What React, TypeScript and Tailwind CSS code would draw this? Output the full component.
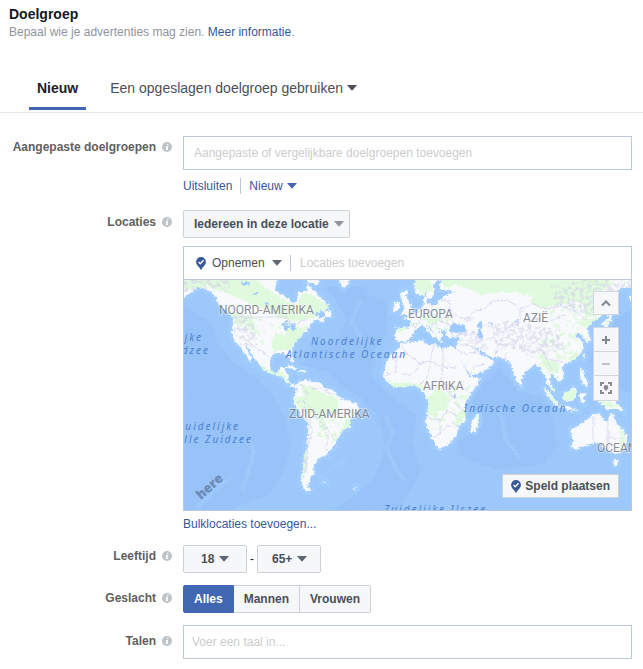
import { useState, type ReactNode } from 'react';
import clsx from 'clsx';

function Caret({ className }: { className?: string }) {
  return (
    <svg viewBox="0 0 10 6" className={clsx('w-2.5 h-1.5 shrink-0', className)} aria-hidden="true">
      <path d="M0 0h10L5.500 5.200a.7.7 0 0 1-1 0z" fill="currentColor" />
    </svg>
  );
}

function Info() {
  return (
    <svg viewBox="0 0 10 10" className="w-2.5 h-2.5 shrink-0" aria-hidden="true">
      <circle cx="5" cy="5" r="5" fill="#bec3c9" />
      <path d="M5.200 1.800h1.400l-.3 1.300H4.900zM4 4h2.200L5.600 7.200h.7L6.100 8H3.800l.6-3.200h-.6z" fill="#fff" />
    </svg>
  );
}

function Pin() {
  return (
    <svg viewBox="0 0 10 13" className="w-2.5 h-[13px] shrink-0" aria-hidden="true">
      <path d="M5 0a4.9 4.9 0 0 0-4.9 4.9C.1 8 3.2 9.6 5 13c1.800-3.400 4.900-5 4.900-8.100A4.900 4.900 0 0 0 5 0z" fill="#365899" />
      <path d="M2.600 5l1.700 1.700 3.200-3.400" fill="none" stroke="#fff" strokeWidth="1.400" />
    </svg>
  );
}

interface PickerProps {
  id?: string;
  label: string;
  options: string[];
  className?: string;
  caret?: string;
}

function Picker({ id, label, options, className, caret }: PickerProps) {
  return (
    <div className="relative">
      <select id={id} aria-label={label} className={clsx('appearance-none block outline-none', className)}>
        {options.map(o => <option key={o}>{o}</option>)}
      </select>
      <Caret className={clsx('absolute top-1/2 -translate-y-1/2 pointer-events-none', caret)} />
    </div>
  );
}

function Row({ label, htmlFor, className = 'pt-[3px]', children }: { label: string; htmlFor: string; className?: string; children: ReactNode }) {
  return (
    <div className="grid grid-cols-[172px_minmax(0,1fr)] gap-[11px]">
      <div className={className}>
        <label htmlFor={htmlFor} className="flex items-center justify-end gap-1.5 text-[12px] leading-4 font-bold text-[#606060]">
          {label}
          <Info />
        </label>
      </div>
      <div>{children}</div>
    </div>
  );
}

const land = [
  // North and Central America
  'M180 276H278L276 284 275 290 279 294 283 295 289 299 293 303 297 301 297 293 303 291 307 290 306 284 311 287 315 292 320 297 326 302 329 307 324 311 316 312 313 315 319 316 317 320 311 323 308 329 301 336 295 343 292 349 292 356 294 362 291 362 288 356 284 353 277 353 271 357 270 364 271 371 276 373 279 371 281 367 286 367 285 372 289 375 288 381 293 385 299 384 297 388 291 386 286 382 282 377 275 375 265 371 261 367 258 362 253 357 249 349 245 345 247 351 251 357 252 362 248 359 243 350 240 347 235 342 232 334 232 326 233 318 229 313 223 309 218 303 216 297 211 292 205 289 198 287 193 291 188 295 180 299z',
  'M303 278L319 280 318 285 310 283z', 'M324 312L331 310 332 317 326 317z', 'M317 319L326 317 322 322z',
  'M338 278H350L347 285 343 288 340 284z',
  'M284 367L290 365 298 369 292 369z', 'M299 370L306 370 305 373 299 372z',
  // South America
  'M297 386L300 381 306 379 311 382 320 382 325 388 333 390 337 395 341 399 350 401 357 404 358 409 355 415 351 420 350 427 342 431 339 437 335 443 332 449 327 452 327 456 319 457 317 462 314 464 313 470 315 473 310 477 310 482 307 486 312 491 306 491 302 486 301 477 303 468 304 457 307 446 308 434 308 422 303 417 297 409 293 399 296 393z',
  // Europe and Asia
  'M396 328L404 327 410 328 410 321 404 318 411 315 418 311 422 307 424 302 424 296 427 298 427 304 436 305 441 299 447 294 455 292 447 290 440 290 439 285 442 281 438 280 433 285 434 294 431 299 427 298 427 292 421 296 416 294 414 286 418 276H635V288L622 288 614 293 612 301 608 309 600 317 592 323 586 328 589 333 591 340 587 343 583 337 579 333 575 336 582 341 584 348 579 356 573 361 565 364 561 367 564 373 563 379 558 382 555 377 552 374 549 379 552 386 556 392 552 392 547 384 546 377 542 373 539 366 533 365 527 370 522 377 521 384 517 383 513 372 511 363 504 360 499 357 490 357 482 351 475 347 480 354 486 356 488 358 494 362 489 368 481 372 471 376 467 370 462 361 457 353 457 344 459 338 451 338 445 335 446 329 442 330 438 327 443 336 439 341 436 336 431 328 426 325 431 331 437 336 434 338 427 330 422 325 416 329 413 335 409 340 404 342 396 341z',
  'M401 292L407 290 406 297 410 303 413 312 407 315 401 315 404 309 402 302z', 'M394 303L400 302 399 310 393 312z',
  'M437 340L443 341 442 343z', 'M594 331L599 328 600 331z', 'M601 324L606 328 611 321 612 313 609 310 608 318z', 'M630 296L632 296 632 305 630 300z',
  // Africa
  'M401 343L410 342 423 340 427 345 434 344 443 349 450 346 457 349 459 356 465 367 469 377 480 378 477 386 470 395 465 404 465 413 466 420 458 427 457 434 453 440 447 446 438 449 434 442 430 434 425 423 428 410 428 403 425 395 420 388 413 385 405 387 394 387 386 381 383 374 386 363 391 354 398 349z',
  'M479 413L479 421 475 432 471 432 471 424 475 417z',
  // South-east Asia and Oceania
  'M543 387L548 390 556 400 559 407 553 403 547 395z', 'M558 406L570 407 578 411 567 410z',
  'M563 393L570 391 574 386 577 391 574 400 567 402 563 398z', 'M579 394L587 393 583 397 585 404 581 402z',
  'M580 369L584 370 584 376 588 381 587 387 583 384 580 376z', 'M583 353L585 355 583 360z',
  'M595 397L602 400 611 399 618 404 624 411 615 409 607 409 601 404z',
  'M570 429L580 425 585 421 592 415 600 413 602 419 608 422 611 412 614 417 617 424 623 429 627 437 625 447 621 453 614 454 607 450 601 444 594 443 585 446 577 449 571 448 573 440z',
  'M613 460L619 460 617 466 614 465z', 'M520 384L523 386 521 388z',
  'M322 482L326 481 326 483z', 'M354 488L357 489 355 490z',
].join('');

const green = [
  'M180 276H250L264 286 275 294 291 304 297 303 305 292 315 296 329 306 322 313 308 320 296 322 280 318 268 311 250 304 236 297 222 291 207 287 184 290z',
  'M224 304L232 312 240 315 251 315 253 322 259 334 251 331 244 321 238 326 233 318z',
  'M273 337L285 334 289 326 300 328 309 325 300 337 292 346 288 350 273 351 271 343z',
  'M249 359L258 363 268 370 276 371 285 374 290 384 281 377 265 372z',
  'M300 384L312 387 320 392 336 397 339 403 337 411 329 414 323 421 315 419 308 413 302 410 295 402 294 398 305 396z',
  'M318 422L325 421 328 429 322 432z', 'M305 449L308 455 305 472 302 480 302 463z', 'M344 424L354 410 350 426 338 436z',
  'M439 276H603L614 282 602 291 606 301 598 314 588 318 586 306 576 300 558 304 543 309 531 303 533 296 517 293 499 292 481 295 470 289 453 284 446 290z',
  'M413 279H431L432 290 424 295 417 291z', 'M573 323L590 319 599 315 589 328z',
  'M538 356L545 355 548 361 557 362 559 372 551 373 546 369z', 'M569 358L577 350 578 356 571 362z',
  'M428 398L437 389 448 394 449 403 446 410 436 412 428 416z', 'M384 378L393 383 410 383 422 385 427 391 420 389 394 387z',
  'M455 415L463 410 463 421 456 428z', 'M478 414L480 418 476 427z', 'M564 392L575 389 575 400 564 400z',
  'M543 387L557 400 556 406z', 'M596 398L622 406 609 408z', 'M617 425L625 434 625 448 619 452 621 436z',
  'M396 328L409 328 403 331 397 333z', 'M419 317L432 313 443 320 431 325z', 'M553 387L556 392 549 389z',
].join('');

const lakes = [
  'M282 323L287 321 290 324 294 323 296 327 293 331 290 327 286 331 283 329z',
  'M450 326L455 323 459 325 463 324 468 331 459 333 449 331z',
  'M477 323L482 322 482 327 480 328 484 338 480 340 477 333 479 329z',
  'M489 322L493 323 492 327z', 'M514 321L520 319 515 323z', 'M555 308L560 305 563 300 563 304z',
  'M241 283L247 281 250 284 244 286z', 'M252 295L258 291 259 293z', 'M452 395L456 394 455 399z', 'M265 303L268 302 267 309z',
].join('');

const deepSea = [
  'M184 306L198 313 213 326 218 345 234 363 258 379 274 397 286 421 290 449 282 475 267 496 230 510H184z',
  'M326 287L337 302 346 320 338 340 314 343 302 365 326 371 337 382 359 396 379 417 386 447 374 479 334 510H398L421 472 413 443 416 413 391 397 371 376 374 350 387 334 387 302 369 295 365 286z',
  'M471 390L487 380 500 367 513 385 527 393 543 398 552 417 557 445 544 464 495 470 461 456 457 440 478 433z',
  'M599 326L631 310V393L604 383 590 361z',
].join('');

const ridges = 'M248 438L254 452 249 470 242 490 M386 415L392 432 387 450 396 468 404 480 M197 508L214 490 231 478 M346 460L330 470 318 478 M360 300L352 322 362 340 M500 410L506 440 520 458';

const borders = [
  'M233 317H286L293 326 306 319', 'M220 278V300', 'M241 344L252 345 262 352 270 358', 'M301 384L307 393 304 402 313 409 318 420 328 429 335 442',
  'M309 419L312 430 308 445 306 472', 'M312 388L322 389 334 394', 'M304 402L296 401', 'M321 425L328 435 326 451',
  'M401 344L406 353 391 360 M406 353L420 363 430 361 434 344 M430 361L443 367V348 M443 367L457 368 M396 356V372L386 374 M420 363L414 374 401 374 M430 361L428 376 420 385 M443 367L441 381 449 388 462 386 470 393 M428 389L441 386 449 388 451 400 463 410 M426 419H440L448 411 458 417 M440 419V433L434 438 M440 433L452 422 459 427',
  'M409 327L420 322 422 311 M432 305V314L442 318 449 316 454 323 M441 299L449 302 451 313 466 320 475 318 M433 325L439 320 449 326 M472 330L478 341 471 347 459 344 M478 341L493 337 499 345 495 357 M466 320L475 310 484 309 493 301 508 300 520 309 533 304 547 309 562 306 577 312 587 321 M483 325L493 327 502 332 510 326 520 321 520 309 M499 345L507 336 511 329 M507 336L520 348 535 352 542 349 546 358 556 361 566 363 M520 309L534 319 549 322 563 315 M457 350L465 354 477 352 M470 375L474 367 485 364',
  'M593 416V443 M608 421V450 M608 438H624', 'M500 345L507 352 505 361 M520 350L533 357 M546 359L551 369 558 370', 'M417 329L413 326 M425 310L433 315',
];

function WorldMap() {
  return (
    <svg
      viewBox="184 280 447 230"
      preserveAspectRatio="xMidYMid slice"
      className="block w-full h-[230px] bg-[#9cc8fc]"
      role="img"
      aria-label="Wereldkaart"
    >
      <defs>
        <filter id="coast" x="-5%" y="-5%" width="110%" height="110%" colorInterpolationFilters="sRGB">
          <feTurbulence type="fractalNoise" baseFrequency="0.35" numOctaves="2" seed="4" />
          <feDisplacementMap in="SourceGraphic" scale="5" xChannelSelector="R" yChannelSelector="G" />
        </filter>
        <filter id="relief" x="0" y="0" width="100%" height="100%" colorInterpolationFilters="sRGB">
          <feTurbulence type="fractalNoise" baseFrequency="0.25" numOctaves="3" seed="9" />
          <feColorMatrix values="0 0 0 0 .84  0 0 0 0 .85  0 0 0 0 .91  5 0 0 0 -2.2" />
          <feComposite in2="SourceGraphic" operator="in" />
        </filter>
        <filter id="scrub" x="0" y="0" width="100%" height="100%" colorInterpolationFilters="sRGB">
          <feTurbulence type="fractalNoise" baseFrequency="0.18" numOctaves="3" seed="21" />
          <feColorMatrix values="0 0 0 0 .87  0 0 0 0 .98  0 0 0 0 .86  8 0 0 0 -4.4" />
          <feComposite in2="SourceGraphic" operator="in" />
        </filter>
        <clipPath id="land"><path d={land} /></clipPath>
      </defs>
      <path d={deepSea} fill="#97c3f8" filter="url(#coast)" />
      <path d={ridges} fill="none" stroke="#a3cdfb" strokeWidth="4" strokeOpacity="0.6" filter="url(#coast)" />
      <path d={land} fill="none" stroke="#a1ccff" strokeWidth="7" strokeLinejoin="round" filter="url(#coast)" />
      <g filter="url(#coast)">
        <path d={land} fill="#f8f9fd" />
        <g clipPath="url(#land)">
          <path d={green} fill="#dffadc" />
        </g>
        <path d={lakes} fill="#9fcaff" />
      </g>
      <g clipPath="url(#land)">
        <path
          d="M232 312L262 318 268 345 245 344zM270 322H308L290 350H272zM425 395L470 385 470 425 430 430zM410 310L450 308 450 330 410 330zM535 340L590 320 585 360 565 385 540 375zM300 400L345 410 335 445 305 430zM540 300H620V340H560z"
          filter="url(#scrub)"
        />
        <path
          d="M492 325L510 319 535 325 560 330 565 348 546 356 520 351 495 344zM233 310L252 318 258 345 245 344 234 334zM444 333L475 331 490 350 475 350zM180 276H230V292H184zM300 400L310 415 309 450 304 480 300 470 307 440zM550 285L615 276V300L590 315 555 306zM610 276H635V288H610z"
          filter="url(#relief)"
          opacity="0.7"
        />
        {borders.map(d => (
          <path key={d} d={d} fill="none" stroke="#dcdaf0" strokeWidth="1" filter="url(#coast)" />
        ))}
      </g>
      <g className="font-[Roboto,sans-serif] text-[12px]" fill="#74777f" fillOpacity="0.85" stroke="#fff" strokeOpacity="0.35" strokeWidth="2" paintOrder="stroke">
        <text x="219" y="314">NOORD-AMERIKA</text>
        <text x="408" y="318">EUROPA</text>
        <text x="523" y="322">AZIË</text>
        <text x="423" y="390">AFRIKA</text>
        <text x="289" y="418">ZUID-AMERIKA</text>
        <text x="597" y="452">OCEANIË</text>
      </g>
      <g className="font-['Noto_Sans',sans-serif] text-[10px] italic tracking-[2px]" fill="#4b82d1">
        <text x="203" y="341" textAnchor="end">Noordelijke</text>
        <text x="210" y="354" textAnchor="end">Stille Zuidzee</text>
        <text x="311" y="345">Noordelijke</text>
        <text x="286" y="358">Atlantische Oceaan</text>
        <text x="464" y="412">Indische Oceaan</text>
        <text x="240" y="430" textAnchor="end">Zuidelijke</text>
        <text x="253" y="443" textAnchor="end">Stille Zuidzee</text>
        <text x="384" y="513">Zuidelijke IJszee</text>
      </g>
      <text transform="translate(201 500) rotate(-42)" className="font-['Open_Sans',sans-serif] text-[13px] font-extrabold" fill="#6c8ab5">here</text>
    </svg>
  );
}

const mapButton = 'h-6 flex items-center justify-center bg-[#f6f7f9] text-[#7f8791]';
const pickerBox = 'h-7 rounded-xs border border-[#ced0d4] bg-[#f6f7f9] text-[12px] font-bold text-[#4b4f56]';
const textBox = 'block w-full h-[34px] border border-[#bdc7d8] bg-white text-[12px] text-[#1d2129] placeholder:text-[#cccccc] outline-none';
const genders = ['Alles', 'Mannen', 'Vrouwen'];

export default function App() {
  const [gender, setGender] = useState('Alles');

  return (
    <main className="bg-white pb-2.5 font-['Liberation_Sans',Arial,sans-serif] text-[12px] leading-4 text-[#1d2129]">
      <header className="px-[9px] pt-1.5">
        <h1 className="text-[14px] leading-4 font-bold text-[#141823]">Doelgroep</h1>
        <p className="mt-0.5 text-[#90949c]">
          Bepaal wie je advertenties mag zien. <a href="#info" className="text-[#365899]">Meer informatie</a>.
        </p>
      </header>

      <nav className="mt-7 flex gap-4 border-b border-[#e5e6ea] pl-[29px] pb-0.5 text-[14px]">
        <button className="h-[42px] border-b-3 border-[#4267b2] px-2 font-bold text-[#1d2129]">Nieuw</button>
        <button className="flex h-[42px] items-center gap-1 border-b-3 border-transparent px-2 text-[#4b4f56]">
          Een opgeslagen doelgroep gebruiken
          <Caret />
        </button>
      </nav>

      <form className="flex flex-col gap-3 pt-[23px] pr-[11px]" onSubmit={e => e.preventDefault()}>
        <Row label="Aangepaste doelgroepen" htmlFor="audiences">
          <input id="audiences" className={clsx(textBox, 'px-2.5')} placeholder="Aangepaste of vergelijkbare doelgroepen toevoegen" />
          <div className="mt-2 mb-1 flex items-center text-[#365899]">
            <button type="button" className="pr-2">Uitsluiten</button>
            <button type="button" className="flex items-center gap-1 border-l border-[#bdc7d8] pl-2">
              Nieuw
              <Caret className="text-[#4267b2]" />
            </button>
          </div>
        </Row>

        <Row label="Locaties" htmlFor="location-type" className="pt-1">
          <div className="flex">
            <Picker
              id="location-type"
              label="Locaties"
              options={['Iedereen in deze locatie', 'Mensen die hier wonen']}
              className={clsx(pickerBox, 'w-[167px] pl-2.5')}
              caret="right-1.5 text-[#90949c]"
            />
          </div>
          <div className="mt-2 border border-[#bdc7d8]">
            <div className="flex h-[33px] items-center border-b border-[#bdc7d8] pl-3">
              <Pin />
              <Picker
                label="Opnemen of uitsluiten"
                options={['Opnemen', 'Uitsluiten']}
                className="w-[84px] h-6 pl-1.5 text-[12px] text-[#4b4f56]"
                caret="right-2 text-[#5f6673]"
              />
              <input
                aria-label="Locaties toevoegen"
                className="h-4 min-w-0 flex-1 border-l border-[#bdc7d8] pl-[9px] outline-none placeholder:text-[#cccccc]"
                placeholder="Locaties toevoegen"
              />
            </div>
            <div className="relative overflow-hidden">
              <WorldMap />
              <div className="absolute top-[11px] right-3 flex w-[26px] flex-col gap-3">
                <button type="button" aria-label="Kaart inklappen" className={clsx(mapButton, 'border border-[#d3d6db]')}>
                  <svg viewBox="0 0 10 6" className="w-2.5 h-1.5"><path d="M1 5.500l4-4 4 4" fill="none" stroke="currentColor" strokeWidth="2" /></svg>
                </button>
                <div className="flex flex-col divide-y divide-[#d3d6db] border border-[#d3d6db]">
                  <button type="button" aria-label="Inzoomen" className={mapButton}>
                    <svg viewBox="0 0 8 8" className="w-2 h-2"><path d="M4 0v8M0 4h8" stroke="currentColor" strokeWidth="2" /></svg>
                  </button>
                  <button type="button" aria-label="Uitzoomen" className={mapButton}>
                    <svg viewBox="0 0 8 8" className="w-2 h-2"><path d="M0 4h8" stroke="#bec3c9" strokeWidth="2" /></svg>
                  </button>
                  <button type="button" aria-label="Centreren" className={mapButton}>
                    <svg viewBox="0 0 12 12" className="w-3 h-3">
                      <path d="M1 4V1h3M8 1h3v3M11 8v3H8M4 11H1V8" fill="none" stroke="#8d8791" strokeWidth="2" />
                      <path d="M6 3a2.400 2.400 0 0 0-2.400 2.400C3.600 7 5.300 7.500 6 9.200c.7-1.700 2.400-2.200 2.400-3.800A2.400 2.400 0 0 0 6 3z" fill="#8d8791" />
                    </svg>
                  </button>
                </div>
              </div>
              <button type="button" className="absolute right-3 bottom-3 flex h-6 items-center gap-1 border border-[#ced0d4] bg-[#f6f7f9] px-2 font-bold text-[#4b4f56]">
                <Pin />
                Speld plaatsen
              </button>
            </div>
          </div>
          <a href="#bulk" className="mt-[5px] mb-px block text-[#365899]">Bulklocaties toevoegen...</a>
        </Row>

        <Row label="Leeftijd" htmlFor="age-min">
          <div className="flex items-center">
            <Picker id="age-min" label="Minimumleeftijd" options={['18', '21', '25']} className={clsx(pickerBox, 'w-16 pl-[17px]')} caret="right-[18px] text-[#5f6673]" />
            <span className="w-2.5 text-center">-</span>
            <Picker label="Maximumleeftijd" options={['65+', '55', '45']} className={clsx(pickerBox, 'w-16 pl-3.5')} caret="right-3.5 text-[#5f6673]" />
          </div>
        </Row>

        <Row label="Geslacht" htmlFor="gender-Alles" className="pt-[5px]">
          <div className="flex">
            {genders.map(g => (
              <button
                key={g}
                id={`gender-${g}`}
                type="button"
                aria-pressed={gender === g}
                onClick={() => setGender(g)}
                className={clsx(
                  'h-7 border-y border-r px-2.5 font-bold first:rounded-l-xs first:border-l last:rounded-r-xs',
                  gender === g ? 'border-[#4267b2] bg-[#4267b2] text-white' : 'border-[#ced0d4] bg-[#f6f7f9] text-[#4b4f56]',
                )}
              >
                {g}
              </button>
            ))}
          </div>
        </Row>

        <Row label="Talen" htmlFor="languages" className="pt-2">
          <input id="languages" className={clsx(textBox, 'px-2')} placeholder="Voer een taal in..." />
        </Row>
      </form>
    </main>
  );
}
